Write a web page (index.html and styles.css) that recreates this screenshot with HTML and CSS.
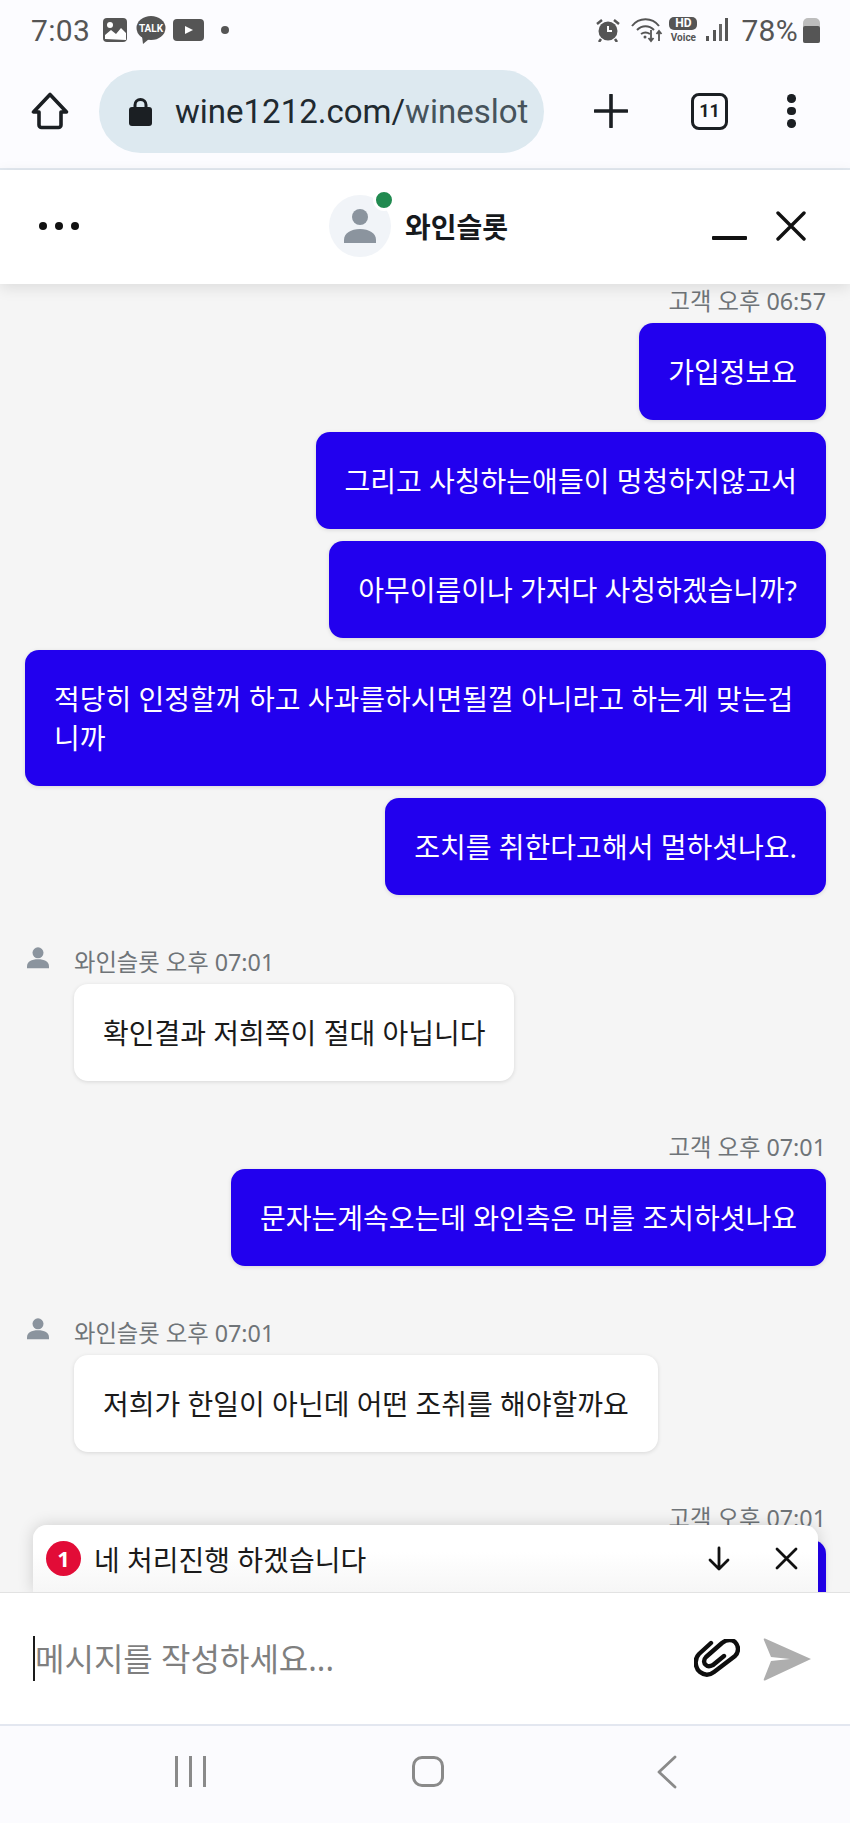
FILE: index.html

```html
<!DOCTYPE html>
<html lang="ko">
<head>
    <meta charset="UTF-8">
    <title>와인슬롯</title>
    <link rel="stylesheet" href="styles.css">
</head>
<body>
<div class="phone">
    <div class="status">
        <div class="status-left">
            <span class="clock">7:03</span>
            <svg class="st-img" width="26" height="26" viewBox="0 0 26 26"><rect x="1" y="1" width="24" height="24" rx="4" fill="#555"/><circle cx="8" cy="8" r="3" fill="#fff"/><path d="M3 22v-4l6-5 5 4 5-6 5 5v7z" fill="#fff"/></svg>
            <svg class="st-talk" width="30" height="28" viewBox="0 0 30 28"><ellipse cx="15" cy="12" rx="14.500" ry="12" fill="#555"/><path d="M6 20l1 8 6-5z" fill="#555"/><text x="15" y="15.500" class="talk">TALK</text></svg>
            <svg class="st-play" width="31" height="22" viewBox="0 0 31 22"><rect width="31" height="22" rx="4" fill="#555"/><path d="M12 7l8 4-8 4z" fill="#fff"/></svg>
            <span class="dot"></span>
        </div>
        <div class="status-right">
            <svg width="24" height="24" viewBox="0 0 24 24"><circle cx="12" cy="13" r="9.500" fill="#555"/><path d="M12 8v5h4" fill="none" stroke="#fff" stroke-width="2"/><path d="M1 6l5-4M23 6l-5-4M5 21l-2 3M19 21l2 3" stroke="#555" stroke-width="2.500" fill="none"/></svg>
            <svg class="wifi" width="33" height="26" viewBox="0 0 33 26"><g fill="none" stroke="#555" stroke-width="2"><path d="M1 9c7-9 20-9 27 0"/><path d="M6 13c5-5 12-5 17 0"/><path d="M10 17c3-2 6-2 9 0"/></g><circle cx="14" cy="20" r="1.500" fill="#555"/><path d="M20 13v11M17.500 21l2.500 3 2.500-3M28 24V14M25.500 17l2.500-3 2.500 3" fill="none" stroke="#555" stroke-width="1.800"/></svg>
            <div class="hd"><span class="hd-top">HD</span><span class="hd-bot">Voice</span></div>
            <svg class="signal" width="22" height="24" viewBox="0 0 22 24"><g fill="#555"><rect x="0" y="18" width="3" height="5"/><rect x="7" y="12" width="3" height="11"/><rect x="13" y="6" width="3" height="17" opacity=".9"/><rect x="19" y="0" width="3" height="23"/></g></svg>
            <span class="batt-num">78%</span>
            <div class="batt"><span class="batt-fill"></span></div>
        </div>
    </div>

    <div class="toolbar">
        <svg width="38" height="38" viewBox="0 0 38 38"><path d="M19 2.500L2.500 20H8v13a2.500 2.500 0 0 0 2.500 2.500h17A2.500 2.500 0 0 0 30 33V20h5.500z" fill="none" stroke="#1b1f23" stroke-width="3.600" stroke-linejoin="round"/></svg>
        <div class="pill">
            <svg width="23" height="29" viewBox="0 0 23 29"><path d="M6 13V8a5.500 5.500 0 0 1 11 0v5" fill="none" stroke="#1b1f23" stroke-width="3"/><rect y="10" width="23" height="19" rx="3" fill="#1b1f23"/></svg>
            <span class="url">wine1212.com/<span class="url-path">wineslot</span></span>
        </div>
        <svg class="tb-plus" width="34" height="34" viewBox="0 0 34 34"><path d="M17 1v32M1 17h32" stroke="#1b1f23" stroke-width="3.600" stroke-linecap="round"/></svg>
        <div class="tabs">11</div>
        <div class="kebab"><span></span><span></span><span></span></div>
    </div>

    <div class="chat-head">
        <div class="more"><span></span><span></span><span></span></div>
        <div class="agent">
            <div class="agent-pic">
                <svg width="34" height="36" viewBox="0 0 34 36"><circle cx="17" cy="9" r="8" fill="#8b949e"/><path d="M1 35v-3c0-7 7-11 16-11s16 4 16 11v3z" fill="#8b949e"/></svg>
                <span class="online"></span>
            </div>
            <span class="agent-name">와인슬롯</span>
        </div>
        <div class="head-btns">
            <span class="minimize"></span>
            <svg width="30" height="30" viewBox="0 0 30 30"><path d="M2 2l26 26M28 2L2 28" stroke="#111" stroke-width="3.400" stroke-linecap="round"/></svg>
        </div>
    </div>

    <div class="messages">
        <div class="msg-list">
            <div class="meta meta-me">고객 오후 06:57</div>
            <div class="bubble me">가입정보요</div>
            <div class="bubble me">그리고 사칭하는애들이 멍청하지않고서</div>
            <div class="bubble me">아무이름이나 가저다 사칭하겠습니까?</div>
            <div class="bubble me">적당히 인정할꺼 하고 사과를하시면될껄 아니라고 하는게 맞는겁니까</div>
            <div class="bubble me">조치를 취한다고해서 멀하셧나요.</div>

            <div class="agent-row group">
                <svg class="mini-pic" width="22" height="22" viewBox="0 0 34 34"><circle cx="17" cy="9" r="8.500" fill="#8b949e"/><path d="M0 33v-3c0-7 7-11 17-11s17 4 17 11v3z" fill="#8b949e"/></svg>
                <div class="meta">와인슬롯 오후 07:01</div>
            </div>
            <div class="bubble you">확인결과 저희쪽이 절대 아닙니다</div>

            <div class="meta meta-me group">고객 오후 07:01</div>
            <div class="bubble me">문자는계속오는데 와인측은 머를 조치하셧나요</div>

            <div class="agent-row group">
                <svg class="mini-pic" width="22" height="22" viewBox="0 0 34 34"><circle cx="17" cy="9" r="8.500" fill="#8b949e"/><path d="M0 33v-3c0-7 7-11 17-11s17 4 17 11v3z" fill="#8b949e"/></svg>
                <div class="meta">와인슬롯 오후 07:01</div>
            </div>
            <div class="bubble you">저희가 한일이 아닌데 어떤 조취를 해야할까요</div>

            <div class="meta meta-me group">고객 오후 07:01</div>
            <div class="bubble me bubble-cut"></div>
        </div>
        <div class="toast">
            <span class="badge">1</span>
            <span class="toast-text">네 처리진행 하겠습니다</span>
            <svg class="toast-down" width="24" height="26" viewBox="0 0 24 26"><path d="M12 2v21M3 14l9 9 9-9" fill="none" stroke="#111" stroke-width="2.800" stroke-linecap="round" stroke-linejoin="round"/></svg>
            <svg class="toast-close" width="23" height="23" viewBox="0 0 23 23"><path d="M2 2l19 19M21 2L2 21" stroke="#111" stroke-width="2.800" stroke-linecap="round"/></svg>
        </div>
    </div>

    <div class="composer">
        <span class="caret"></span>
        <span class="placeholder">메시지를 작성하세요...</span>
        <svg class="clip" width="46" height="40" viewBox="0 0 46 40"><path d="M17 4L5 15C0 20 1 29 6 33c5 4 10 3 14 0L41 17c4-4 4-10 0-14-4-3-9-2-13 1L12 18c-3 3-2 7 0 8 2 2 5 1 7 0l11-9" fill="none" stroke="#0e0e0e" stroke-width="4.400" stroke-linecap="round" stroke-linejoin="round"/></svg>
        <svg class="send" width="49" height="44" viewBox="0 0 49 44"><path d="M2 1.500L48 22 2 43.500c-1 .3-1.500-.3-1.200-1.200L8 24l19-2-19-2L.8 2.700C.5 1.800 1 1.200 2 1.500z" fill="#aeaeae"/></svg>
    </div>

    <div class="navbar">
        <div class="nav-recent"><span></span><span></span><span></span></div>
        <span class="nav-home"></span>
        <svg width="22" height="34" viewBox="0 0 22 34"><path d="M19 2L3 17l16 15" fill="none" stroke="#8a8a8a" stroke-width="2.800" stroke-linecap="round" stroke-linejoin="round"/></svg>
    </div>
</div>
</body>
</html>
```

FILE: styles.css

```css
*{
    box-sizing: border-box;
}
html,body{
    margin: 0;
    padding: 0;
}
body{
    font-family: "Noto Sans", "Noto Sans CJK KR", sans-serif;
    background: #fff;
}
.phone{
    width: 850px;
    height: 1823px;
    display: flex;
    flex-direction: column;
    overflow: hidden;
}

/* status bar */
.status{
    height: 60px;
    background: #fcfcff;
    display: flex;
    justify-content: space-between;
    align-items: center;
    padding: 0 30px 0 31px;
    color: #555;
}
.status-left,.status-right{
    display: flex;
    align-items: center;
}
.clock,.batt-num{
    font-family: Roboto, sans-serif;
    font-size: 30px;
    letter-spacing: .3px;
}
.st-img{
    margin-left: 12px;
}
.st-talk{
    margin-left: 8px;
}
.st-play{
    margin-left: 7px;
}
.talk{
    font-family: Roboto, sans-serif;
    font-size: 10px;
    font-weight: 700;
    fill: #fff;
    text-anchor: middle;
}
.dot{
    width: 8px;
    height: 8px;
    border-radius: 50%;
    background: #555;
    margin-left: 17px;
}
.wifi{
    margin-left: 11px;
}
.hd{
    margin-left: 5px;
    width: 28px;
    display: flex;
    flex-direction: column;
    align-items: center;
    font-family: Roboto, sans-serif;
    font-weight: 700;
}
.hd-top{
    width: 28px;
    height: 13px;
    line-height: 13px;
    border-radius: 5px;
    background: #555;
    color: #fff;
    font-size: 12px;
    text-align: center;
}
.hd-bot{
    font-size: 10px;
    line-height: 11px;
    margin-top: 2px;
}
.signal{
    margin-left: 9px;
}
.batt-num{
    margin-left: 13px;
}
.batt{
    width: 17px;
    height: 25px;
    margin-left: 5px;
    background: #bdbdbd;
    border-radius: 5px 5px 2px 2px;
    display: flex;
    align-items: flex-end;
}
.batt-fill{
    display: block;
    width: 100%;
    height: 17px;
    background: #555;
    border-radius: 2px;
}

/* browser toolbar */
.toolbar{
    height: 110px;
    background: #fcfcff;
    border-bottom: 2px solid #e3e9f0;
    display: flex;
    align-items: center;
    padding: 0 0 6px 31px;
}
.pill{
    width: 445px;
    height: 83px;
    margin-left: 30px;
    border-radius: 42px;
    background: #dde9f0;
    display: flex;
    align-items: center;
    padding-left: 30px;
}
.url{
    font-family: Roboto, sans-serif;
    font-size: 33px;
    color: #1f2a30;
    margin-left: 23px;
    white-space: nowrap;
}
.url-path{
    color: #46535b;
}
.tb-plus{
    margin-left: 50px;
}
.tabs{
    width: 37px;
    height: 37px;
    margin-left: 63px;
    border: 3.500px solid #1b1f23;
    border-radius: 8px;
    font-family: Roboto, sans-serif;
    font-size: 18px;
    font-weight: 700;
    line-height: 30px;
    text-align: center;
    color: #1b1f23;
}
.kebab{
    margin-left: 59px;
    display: flex;
    flex-direction: column;
    gap: 4px;
}
.kebab span{
    width: 8.500px;
    height: 8.500px;
    border-radius: 50%;
    background: #1b1f23;
}

/* chat header */
.chat-head{
    height: 114px;
    background: #fff;
    display: flex;
    align-items: center;
    padding: 0 44px 2px 39px;
    box-shadow: 0 4px 14px rgba(0,0,0,.1);
    position: relative;
    z-index: 2;
}
.more{
    display: flex;
    gap: 8px;
}
.more span{
    width: 8px;
    height: 8px;
    border-radius: 50%;
    background: #111;
}
.agent{
    display: flex;
    align-items: center;
    margin-left: 250px;
}
.agent-pic{
    width: 62px;
    height: 62px;
    border-radius: 50%;
    background: #f1f4f8;
    display: flex;
    align-items: center;
    justify-content: center;
    position: relative;
}
.online{
    position: absolute;
    right: -4px;
    top: -6px;
    width: 22px;
    height: 22px;
    border-radius: 50%;
    background: #218a50;
    border: 3px solid #fff;
}
.agent-name{
    font-size: 28px;
    font-weight: 700;
    color: #16191c;
    margin-left: 14px;
}
.head-btns{
    margin-left: auto;
    display: flex;
    align-items: center;
    gap: 29px;
}
.minimize{
    width: 35px;
    height: 4px;
    margin-top: 24px;
    background: #111;
    border-radius: 1px;
}

/* messages */
.messages{
    flex: 1;
    min-height: 0;
    position: relative;
    overflow: hidden;
    background: #f5f5f5;
}
.msg-list{
    display: flex;
    flex-direction: column;
    gap: 12px;
    padding: 1px 24px 0 25px;
}
.meta{
    font-size: 23.300px;
    line-height: 32px;
    color: #6f7478;
}
.meta-me{
    text-align: right;
    margin-bottom: -6px;
}
.group{
    margin-top: 38px;
}
.agent-row{
    display: flex;
    align-items: flex-start;
    margin-bottom: -5px;
}
.mini-pic{
    margin: 2px 0 0 2px;
}
.agent-row .meta{
    margin: 1px 0 -1px 25px;
}
.bubble{
    font-size: 28px;
    line-height: 39px;
    padding: 30px 29px 28px;
    border-radius: 14px;
    box-shadow: 0 1px 4px rgba(0,0,0,.12);
    word-break: break-all;
}
.me{
    align-self: flex-end;
    background: #2200ee;
    color: #fff;
}
.you{
    align-self: flex-start;
    margin-left: 49px;
    background: #fff;
    color: #1a1a1a;
}
.bubble-cut{
    width: 300px;
    height: 97px;
    padding: 0;
}

/* new message toast */
.toast{
    position: absolute;
    left: 33px;
    bottom: 0;
    width: 785px;
    height: 67px;
    border-radius: 14px 14px 0 0;
    background: linear-gradient(#fff 40%, #f6f6f6);
    box-shadow: 0 0 16px rgba(0,0,0,.16);
    display: flex;
    align-items: center;
    padding-left: 13px;
}
.badge{
    width: 35px;
    height: 35px;
    border-radius: 50%;
    background: #e20c37;
    color: #fff;
    font-size: 22px;
    font-weight: 700;
    line-height: 35px;
    text-align: center;
}
.toast-text{
    font-size: 28px;
    color: #1a1a1a;
    margin-left: 13px;
}
.toast-down{
    margin-left: auto;
}
.toast-close{
    margin: 0 20px 0 44px;
}

/* composer */
.composer{
    height: 134px;
    flex-shrink: 0;
    background: #fff;
    border-top: 1px solid #e2e2e2;
    border-bottom: 2px solid #e3e7f0;
    display: flex;
    align-items: center;
    padding: 0 38px 0 33px;
    position: relative;
}
.caret{
    width: 2px;
    height: 45px;
    background: #1a1a1a;
}
.placeholder{
    font-size: 32px;
    color: #7f7f7f;
    padding-bottom: 4px;
}
.clip{
    margin-left: auto;
}
.send{
    margin-left: 23px;
}

/* android nav */
.navbar{
    height: 97px;
    flex-shrink: 0;
    background: #fbfbfe;
    display: flex;
    align-items: center;
    padding: 0 172px 6px 175px;
    justify-content: space-between;
}
.nav-recent{
    display: flex;
    gap: 11px;
}
.nav-recent span{
    width: 3px;
    height: 31px;
    background: #8a8a8a;
}
.nav-home{
    width: 32px;
    height: 31px;
    border: 3px solid #8a8a8a;
    border-radius: 10px;
    margin-right: 6px;
}
```
